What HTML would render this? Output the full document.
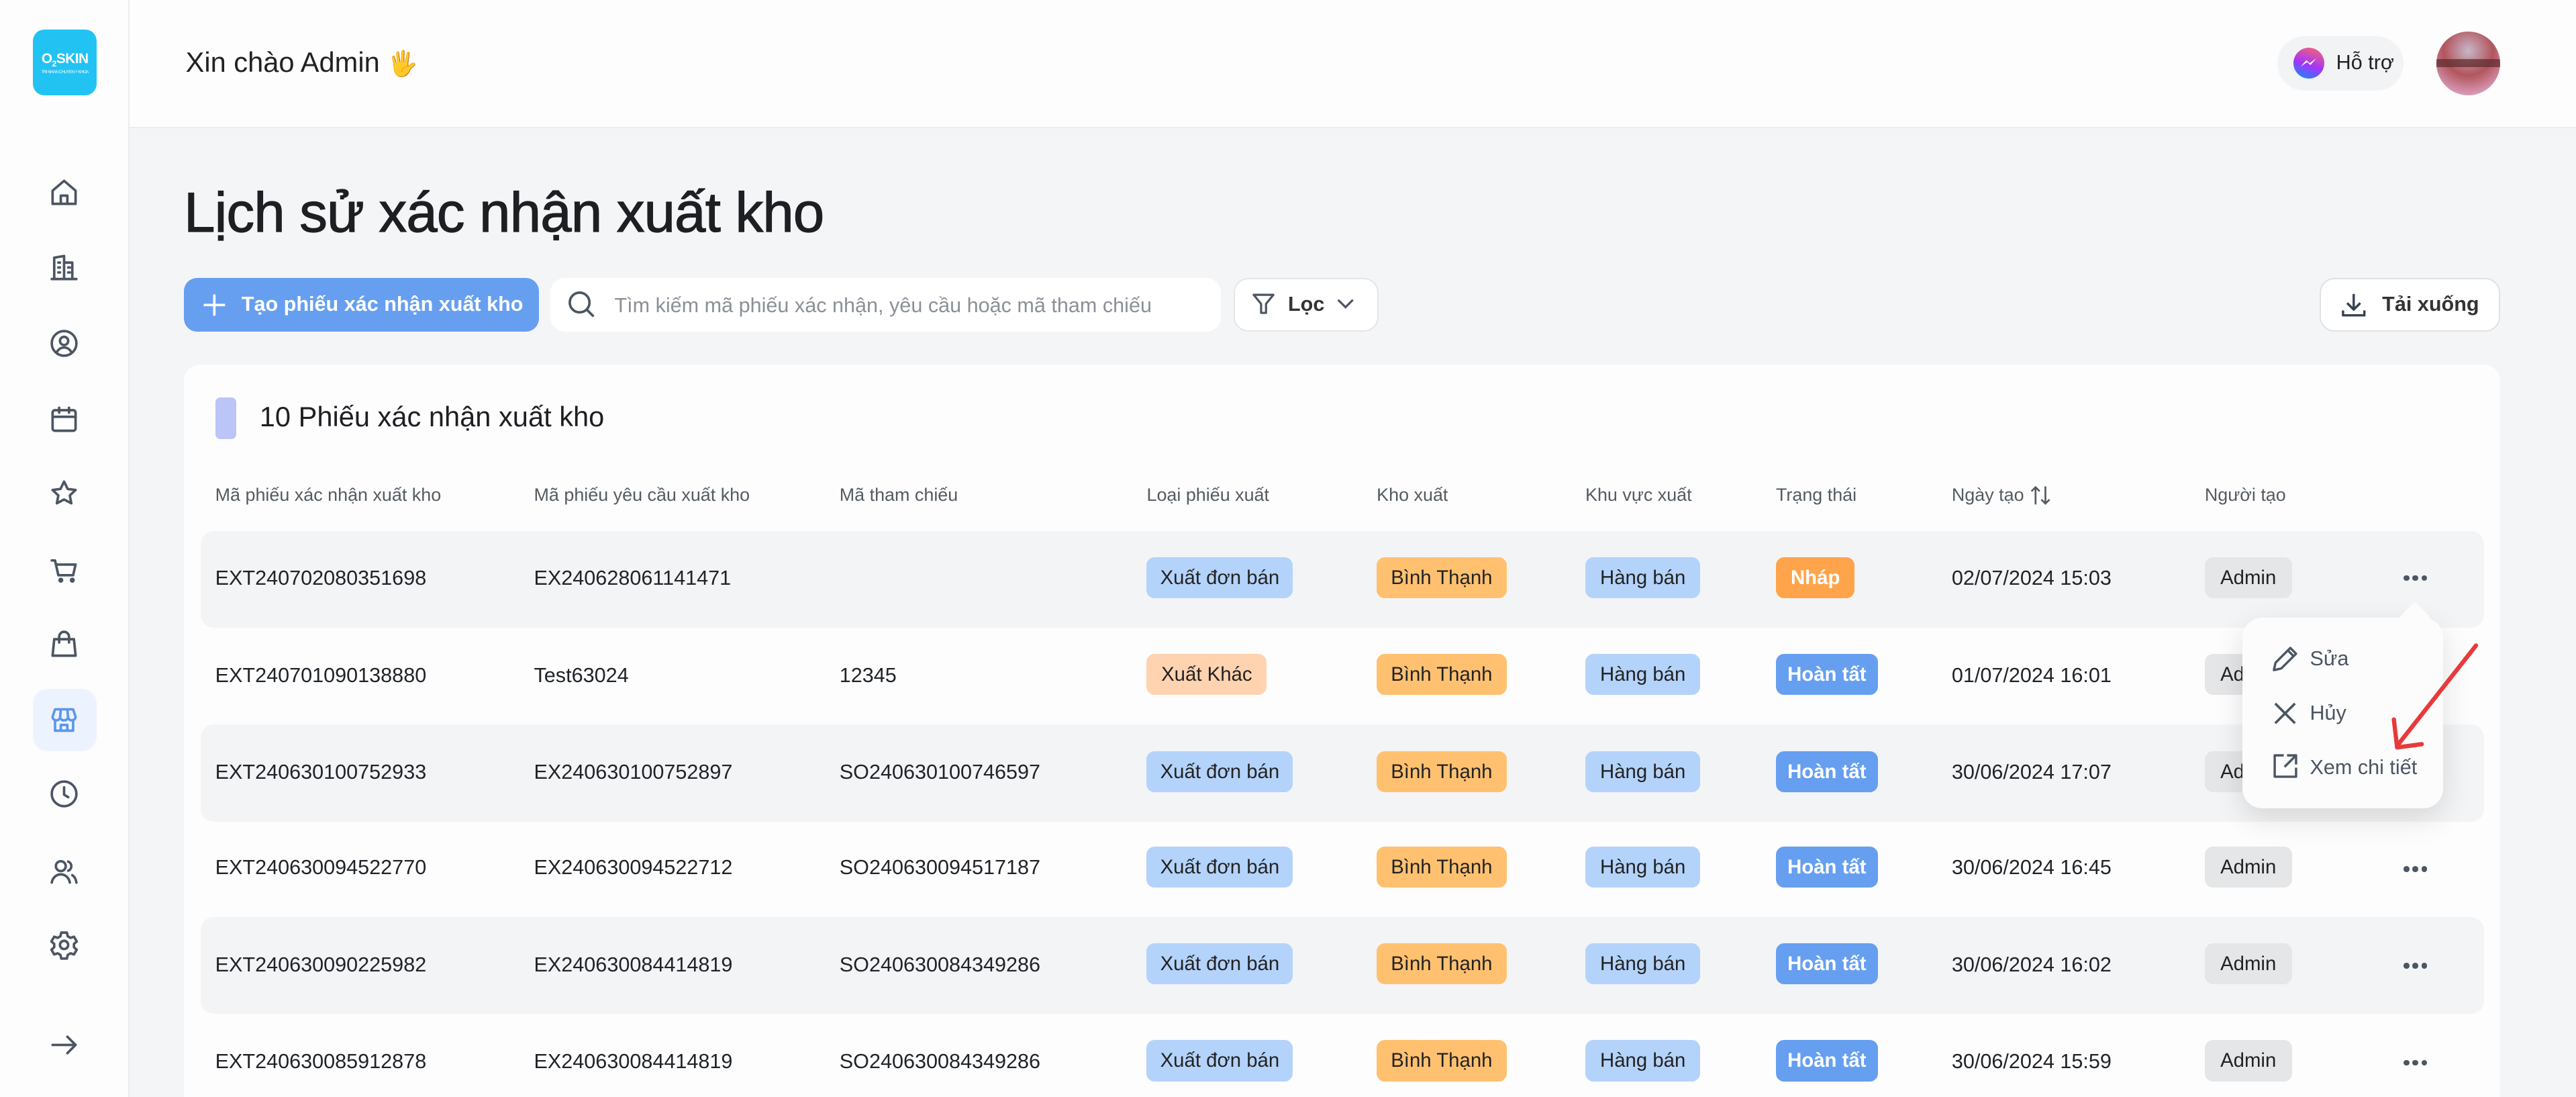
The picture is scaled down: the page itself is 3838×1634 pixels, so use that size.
<!DOCTYPE html>
<html><head><meta charset="utf-8">
<style>
*{box-sizing:border-box;margin:0;padding:0}
html,body{width:3838px;height:1634px;overflow:hidden;background:#f4f5f7}
#root{zoom:2.4477;width:1568px;height:668px;position:relative;font-family:"Liberation Sans","Noto Sans CJK JP",sans-serif;color:#1f2328;overflow:hidden;background:#f4f5f7}
.a{position:absolute}
.side{left:0;top:0;width:79px;height:668px;background:#fdfdfd;border-right:1px solid #ececee}
.logo{left:20px;top:18px;width:39px;height:40px;background:#22c3f3;border-radius:7px;color:#fff;font-size:8.5px;font-weight:bold;text-align:center;padding-top:13px;letter-spacing:-.2px}
.logo small{display:block;font-size:2.5px;font-weight:normal;margin-top:1px}
.ic{left:29px;width:20px;height:20px}
.ic svg{width:20px;height:20px;fill:none;stroke:#4b5563;stroke-width:1.5;stroke-linecap:round;stroke-linejoin:round}
.hdr{left:79px;top:0;width:1489px;height:78px;background:#fdfdfd;border-bottom:1px solid #ececee}
.t{white-space:nowrap}
.badge{position:absolute;height:25px;border-radius:5px;font-size:12px;line-height:25px;text-align:center;color:#222;white-space:nowrap}
.row{position:absolute;left:122px;width:1390px;height:59px;border-radius:8px}
.cell{position:absolute;font-size:12.5px;white-space:nowrap}
.th{position:absolute;top:295px;font-size:11px;color:#555b63;white-space:nowrap}
.dots{position:absolute;left:1463px;width:30px;height:4px;white-space:nowrap;line-height:0}
.dots i{display:inline-block;width:3.5px;height:3.5px;border-radius:50%;background:#4b5563;margin-right:2px;vertical-align:top}
</style></head><body><div id="root">

<div class="a side"></div>
<div class="a logo">O<sub style="font-size:5px">2</sub>SKIN<small>TRI NHAN CHUYEN Y KHOA</small></div>

<div class="a ic" style="top:107px"><svg viewBox="0 0 20 20"><path d="M3 9l7-6 7 6v8H3z"/><path d="M8 17v-5h4v5"/></svg></div>
<div class="a ic" style="top:153px"><svg viewBox="0 0 20 20"><path d="M4 17V4l6-1v14M10 7h5v10M2.5 17h15M6.5 7h1M6.5 10h1M6.5 13h1M12.5 10h1M12.5 13h1"/></svg></div>
<div class="a ic" style="top:199px"><svg viewBox="0 0 20 20"><circle cx="10" cy="10" r="7.5"/><circle cx="10" cy="8.5" r="2.5"/><path d="M5.5 15.5c1-2 2.7-3 4.5-3s3.5 1 4.5 3"/></svg></div>
<div class="a ic" style="top:245px"><svg viewBox="0 0 20 20"><rect x="3" y="4.5" width="14" height="12.5" rx="1.5"/><path d="M3 8.5h14M7 3v3M13 3v3"/></svg></div>
<div class="a ic" style="top:290px"><svg viewBox="0 0 20 20"><path d="M10 3l2.2 4.5 4.8.6-3.5 3.3.9 4.8L10 13.9l-4.4 2.3.9-4.8L3 8.1l4.8-.6z"/></svg></div>
<div class="a ic" style="top:337px"><svg viewBox="0 0 20 20"><path d="M2.5 4h2l2 9h9l1.5-6.5H5.5"/><circle cx="8" cy="16" r=".8"/><circle cx="15" cy="16" r=".8"/></svg></div>
<div class="a ic" style="top:382px"><svg viewBox="0 0 20 20"><path d="M4 7h12l1 10H3z"/><path d="M7 9V5.5a3 3 0 016 0V9"/></svg></div>
<div class="a" style="left:20px;top:419px;width:39px;height:38px;border-radius:9px;background:#edf3fe"></div>
<div class="a ic" style="top:428px"><svg viewBox="0 0 20 20" style="stroke:#5b97ec"><path d="M3 8l1.5-4.5h11L17 8c0 1.3-1 2.2-2.3 2.2S12.4 9.3 12.4 8c0 1.3-1 2.2-2.4 2.2S7.6 9.3 7.6 8c0 1.3-1 2.2-2.3 2.2S3 9.3 3 8zM4.5 10v6.5h11V10M8 16.5v-3.5h4v3.5M7.6 8L8 3.5M12.4 8L12 3.5"/></svg></div>
<div class="a ic" style="top:473px"><svg viewBox="0 0 20 20"><circle cx="10" cy="10" r="7.5"/><path d="M10 6v4.5l2.5 1.5"/></svg></div>
<div class="a ic" style="top:520px"><svg viewBox="0 0 20 20"><circle cx="8" cy="7" r="3"/><path d="M2.5 17c.5-3 2.8-5 5.5-5s5 2 5.5 5M12.5 4.2a3 3 0 010 5.6M15 12.5c1.3.8 2.2 2.5 2.5 4.5"/></svg></div>
<div class="a ic" style="top:565px"><svg viewBox="0 0 20 20"><path d="M8.3 2.5h3.4l.5 2.2 1.7 1 2.1-.7 1.7 2.9-1.7 1.5v2l1.7 1.5-1.7 2.9-2.1-.7-1.7 1-.5 2.2H8.3l-.5-2.2-1.7-1-2.1.7-1.7-2.9 1.7-1.5v-2L2.3 7.9 4 5l2.1.7 1.7-1z"/><circle cx="10" cy="10" r="2.5"/></svg></div>
<div class="a ic" style="top:626px"><svg viewBox="0 0 20 20"><path d="M3 10h14M12 5l5 5-5 5"/></svg></div>

<div class="a hdr"></div>
<div class="a t" style="left:113px;top:28px;font-size:17px;color:#222">Xin chào Admin <span style="font-size:15px">🖐</span></div>
<div class="a" style="left:1386px;top:22px;width:77px;height:33px;border-radius:17px;background:#f2f3f5"></div>
<div class="a" style="left:1396px;top:29px;width:19px;height:19px;border-radius:50%;background:linear-gradient(200deg,#ff6a68,#a334fa 55%,#0695ff)"></div>
<svg class="a" style="left:1399px;top:33px" width="13" height="10" viewBox="0 0 13 10"><path d="M1.5 7.5L5 3.5l2 1.8 4-2.8-3.5 4-2-1.8z" fill="#fff"/></svg>
<div class="a t" style="left:1422px;top:31px;font-size:12.5px;color:#222">Hỗ trợ</div>
<div class="a" style="left:1483px;top:19px;width:39px;height:39px;border-radius:50%;background:radial-gradient(circle at 50% 30%,#c8b7c8,#b2555d 45%,#d89ab6 80%);overflow:hidden"><div style="position:absolute;top:17px;left:0;width:39px;height:5px;background:#5a2a2a;opacity:.7"></div></div>

<div class="a t" style="left:112px;top:110px;font-size:34px;color:#1d1f23;letter-spacing:-.3px;-webkit-text-stroke:.5px #1d1f23">Lịch sử xác nhận xuất kho</div>

<div class="a" style="left:112px;top:169px;width:216px;height:33px;border-radius:8px;background:#669ff0"></div>
<svg class="a" style="left:123px;top:178px" width="15" height="15" viewBox="0 0 15 15"><path d="M7.5 1v13M1 7.5h13" stroke="#fff" stroke-width="1.5"/></svg>
<div class="a t" style="left:147px;top:178px;font-size:12.5px;font-weight:bold;color:#fff">Tạo phiếu xác nhận xuất kho</div>

<div class="a" style="left:335px;top:169px;width:408px;height:33px;border-radius:9px;background:#fff"></div>
<svg class="a" style="left:345px;top:176px" width="19" height="19" viewBox="0 0 19 19"><circle cx="8" cy="8" r="6" fill="none" stroke="#4b5563" stroke-width="1.5"/><path d="M12.5 12.5l4 4" stroke="#4b5563" stroke-width="1.5"/></svg>
<div class="a t" style="left:374px;top:179px;font-size:12.5px;color:#8b9098">Tìm kiếm mã phiếu xác nhận, yêu cầu hoặc mã tham chiếu</div>

<div class="a" style="left:751px;top:169px;width:88px;height:33px;border-radius:9px;background:#fff;border:1px solid #e4e5e8"></div>
<svg class="a" style="left:761px;top:177px" width="16" height="16" viewBox="0 0 16 16"><path d="M2 2.5h12L9.5 8v5.5h-3V8z" fill="none" stroke="#4b5563" stroke-width="1.3" stroke-linejoin="round"/></svg>
<div class="a t" style="left:784px;top:178px;font-size:12.5px;font-weight:bold;color:#333">Lọc</div>
<svg class="a" style="left:813px;top:181px" width="12" height="8" viewBox="0 0 12 8"><path d="M1.5 1.5L6 6l4.5-4.5" fill="none" stroke="#4b5563" stroke-width="1.3"/></svg>

<div class="a" style="left:1412px;top:169px;width:110px;height:33px;border-radius:9px;background:#fff;border:1px solid #e0e1e4"></div>
<svg class="a" style="left:1424px;top:177px" width="17" height="17" viewBox="0 0 17 17"><path d="M8.5 2v9M4.5 7.5l4 4 4-4M2 12v3h13v-3" fill="none" stroke="#374151" stroke-width="1.4" stroke-linejoin="round"/></svg>
<div class="a t" style="left:1450px;top:178px;font-size:12.5px;font-weight:bold;color:#333">Tải xuống</div>

<div class="a" style="left:112px;top:222px;width:1410px;height:460px;border-radius:10px;background:#fdfdfd"></div>
<div class="a" style="left:131px;top:242px;width:13px;height:25px;border-radius:3px;background:#bcc5f7"></div>
<div class="a t" style="left:158px;top:244px;font-size:17px;color:#1d1f23">10 Phiếu xác nhận xuất kho</div>

<div class="th" style="left:131px">Mã phiếu xác nhận xuất kho</div>
<div class="th" style="left:325px">Mã phiếu yêu cầu xuất kho</div>
<div class="th" style="left:511px">Mã tham chiếu</div>
<div class="th" style="left:698px">Loại phiếu xuất</div>
<div class="th" style="left:838px">Kho xuất</div>
<div class="th" style="left:965px">Khu vực xuất</div>
<div class="th" style="left:1081px">Trạng thái</div>
<div class="th" style="left:1188px">Ngày tạo</div>
<svg class="a" style="left:1235px;top:295px" width="14" height="13" viewBox="0 0 14 13"><path d="M4 12V1.5M1.5 4L4 1.5 6.5 4M10 1v10.5M7.5 9l2.5 2.5L12.5 9" fill="none" stroke="#555b63" stroke-width="1.1"/></svg>
<div class="th" style="left:1342px">Người tạo</div>

<div class="row" style="top:323px;background:#f3f4f6"></div>
<div class="row" style="top:441px;background:#f3f4f6"></div>
<div class="row" style="top:558px;background:#f3f4f6"></div>

<div class="cell" style="left:131px;top:345px">EXT240702080351698</div>
<div class="cell" style="left:325px;top:345px">EX240628061141471</div>
<div class="badge" style="left:698px;top:339px;width:89px;background:#b4d3fb">Xuất đơn bán</div>
<div class="badge" style="left:838px;top:339px;width:79px;background:#ffc170">Bình Thạnh</div>
<div class="badge" style="left:965px;top:339px;width:70px;background:#b4d3fb">Hàng bán</div>
<div class="badge" style="left:1081px;top:339px;width:48px;background:#ffa44a;color:#fff;font-weight:bold">Nháp</div>
<div class="cell" style="left:1188px;top:345px">02/07/2024 15:03</div>
<div class="badge" style="left:1342px;top:339px;width:53px;background:#e5e6e8">Admin</div>
<div class="dots" style="top:350px"><i></i><i></i><i></i></div>

<div class="cell" style="left:131px;top:404px">EXT240701090138880</div>
<div class="cell" style="left:325px;top:404px">Test63024</div>
<div class="cell" style="left:511px;top:404px">12345</div>
<div class="badge" style="left:698px;top:398px;width:73px;background:#ffd3b0">Xuất Khác</div>
<div class="badge" style="left:838px;top:398px;width:79px;background:#ffc170">Bình Thạnh</div>
<div class="badge" style="left:965px;top:398px;width:70px;background:#b4d3fb">Hàng bán</div>
<div class="badge" style="left:1081px;top:398px;width:62px;background:#669ff0;color:#fff;font-weight:bold">Hoàn tất</div>
<div class="cell" style="left:1188px;top:404px">01/07/2024 16:01</div>
<div class="badge" style="left:1342px;top:398px;width:53px;background:#e5e6e8">Admin</div>

<div class="cell" style="left:131px;top:463px">EXT240630100752933</div>
<div class="cell" style="left:325px;top:463px">EX240630100752897</div>
<div class="cell" style="left:511px;top:463px">SO240630100746597</div>
<div class="badge" style="left:698px;top:457px;width:89px;background:#b4d3fb">Xuất đơn bán</div>
<div class="badge" style="left:838px;top:457px;width:79px;background:#ffc170">Bình Thạnh</div>
<div class="badge" style="left:965px;top:457px;width:70px;background:#b4d3fb">Hàng bán</div>
<div class="badge" style="left:1081px;top:457px;width:62px;background:#669ff0;color:#fff;font-weight:bold">Hoàn tất</div>
<div class="cell" style="left:1188px;top:463px">30/06/2024 17:07</div>
<div class="badge" style="left:1342px;top:457px;width:53px;background:#e5e6e8">Admin</div>

<div class="cell" style="left:131px;top:521px">EXT240630094522770</div>
<div class="cell" style="left:325px;top:521px">EX240630094522712</div>
<div class="cell" style="left:511px;top:521px">SO240630094517187</div>
<div class="badge" style="left:698px;top:515px;width:89px;background:#b4d3fb">Xuất đơn bán</div>
<div class="badge" style="left:838px;top:515px;width:79px;background:#ffc170">Bình Thạnh</div>
<div class="badge" style="left:965px;top:515px;width:70px;background:#b4d3fb">Hàng bán</div>
<div class="badge" style="left:1081px;top:515px;width:62px;background:#669ff0;color:#fff;font-weight:bold">Hoàn tất</div>
<div class="cell" style="left:1188px;top:521px">30/06/2024 16:45</div>
<div class="badge" style="left:1342px;top:515px;width:53px;background:#e5e6e8">Admin</div>
<div class="dots" style="top:527px"><i></i><i></i><i></i></div>

<div class="cell" style="left:131px;top:580px">EXT240630090225982</div>
<div class="cell" style="left:325px;top:580px">EX240630084414819</div>
<div class="cell" style="left:511px;top:580px">SO240630084349286</div>
<div class="badge" style="left:698px;top:574px;width:89px;background:#b4d3fb">Xuất đơn bán</div>
<div class="badge" style="left:838px;top:574px;width:79px;background:#ffc170">Bình Thạnh</div>
<div class="badge" style="left:965px;top:574px;width:70px;background:#b4d3fb">Hàng bán</div>
<div class="badge" style="left:1081px;top:574px;width:62px;background:#669ff0;color:#fff;font-weight:bold">Hoàn tất</div>
<div class="cell" style="left:1188px;top:580px">30/06/2024 16:02</div>
<div class="badge" style="left:1342px;top:574px;width:53px;background:#e5e6e8">Admin</div>
<div class="dots" style="top:586px"><i></i><i></i><i></i></div>

<div class="cell" style="left:131px;top:639px">EXT240630085912878</div>
<div class="cell" style="left:325px;top:639px">EX240630084414819</div>
<div class="cell" style="left:511px;top:639px">SO240630084349286</div>
<div class="badge" style="left:698px;top:633px;width:89px;background:#b4d3fb">Xuất đơn bán</div>
<div class="badge" style="left:838px;top:633px;width:79px;background:#ffc170">Bình Thạnh</div>
<div class="badge" style="left:965px;top:633px;width:70px;background:#b4d3fb">Hàng bán</div>
<div class="badge" style="left:1081px;top:633px;width:62px;background:#669ff0;color:#fff;font-weight:bold">Hoàn tất</div>
<div class="cell" style="left:1188px;top:639px">30/06/2024 15:59</div>
<div class="badge" style="left:1342px;top:633px;width:53px;background:#e5e6e8">Admin</div>
<div class="dots" style="top:645px"><i></i><i></i><i></i></div>

<div class="a" style="left:1365px;top:376px;width:122px;height:116px;border-radius:12px;background:#fcfcfc;box-shadow:0 6px 18px rgba(0,0,0,.12)"></div>
<div class="a" style="left:1463px;top:369px;width:14px;height:14px;background:#fcfcfc;transform:rotate(45deg);border-radius:2px"></div>
<svg class="a" style="left:1382px;top:392px" width="18" height="18" viewBox="0 0 18 18"><path d="M2 16l1-4.5L12 2.5l3.5 3.5-9 9z M10.5 4l3.5 3.5" fill="none" stroke="#4b5563" stroke-width="1.4" stroke-linejoin="round"/></svg>
<div class="a t" style="left:1406px;top:394px;font-size:12.5px;color:#4b5563">Sửa</div>
<svg class="a" style="left:1383px;top:426px" width="16" height="16" viewBox="0 0 16 16"><path d="M2 2l12 12M14 2L2 14" stroke="#4b5563" stroke-width="1.5"/></svg>
<div class="a t" style="left:1406px;top:427px;font-size:12.5px;color:#4b5563">Hủy</div>
<svg class="a" style="left:1382px;top:457px" width="18" height="18" viewBox="0 0 18 18"><path d="M8 2.5H2.5v13h13V10M10 2.5h5.5V8M15.5 2.5L8.5 9.5" fill="none" stroke="#4b5563" stroke-width="1.4" stroke-linejoin="round"/></svg>
<div class="a t" style="left:1406px;top:460px;font-size:12.5px;color:#4b5563">Xem chi tiết</div>

<svg class="a" style="left:1440px;top:385px" width="80" height="80" viewBox="0 0 80 80"><path d="M67 8L19 69M17 53l2 17 15-2" fill="none" stroke="#e83a3a" stroke-width="2.6" stroke-linecap="round" stroke-linejoin="round"/></svg>

</div></body></html>
